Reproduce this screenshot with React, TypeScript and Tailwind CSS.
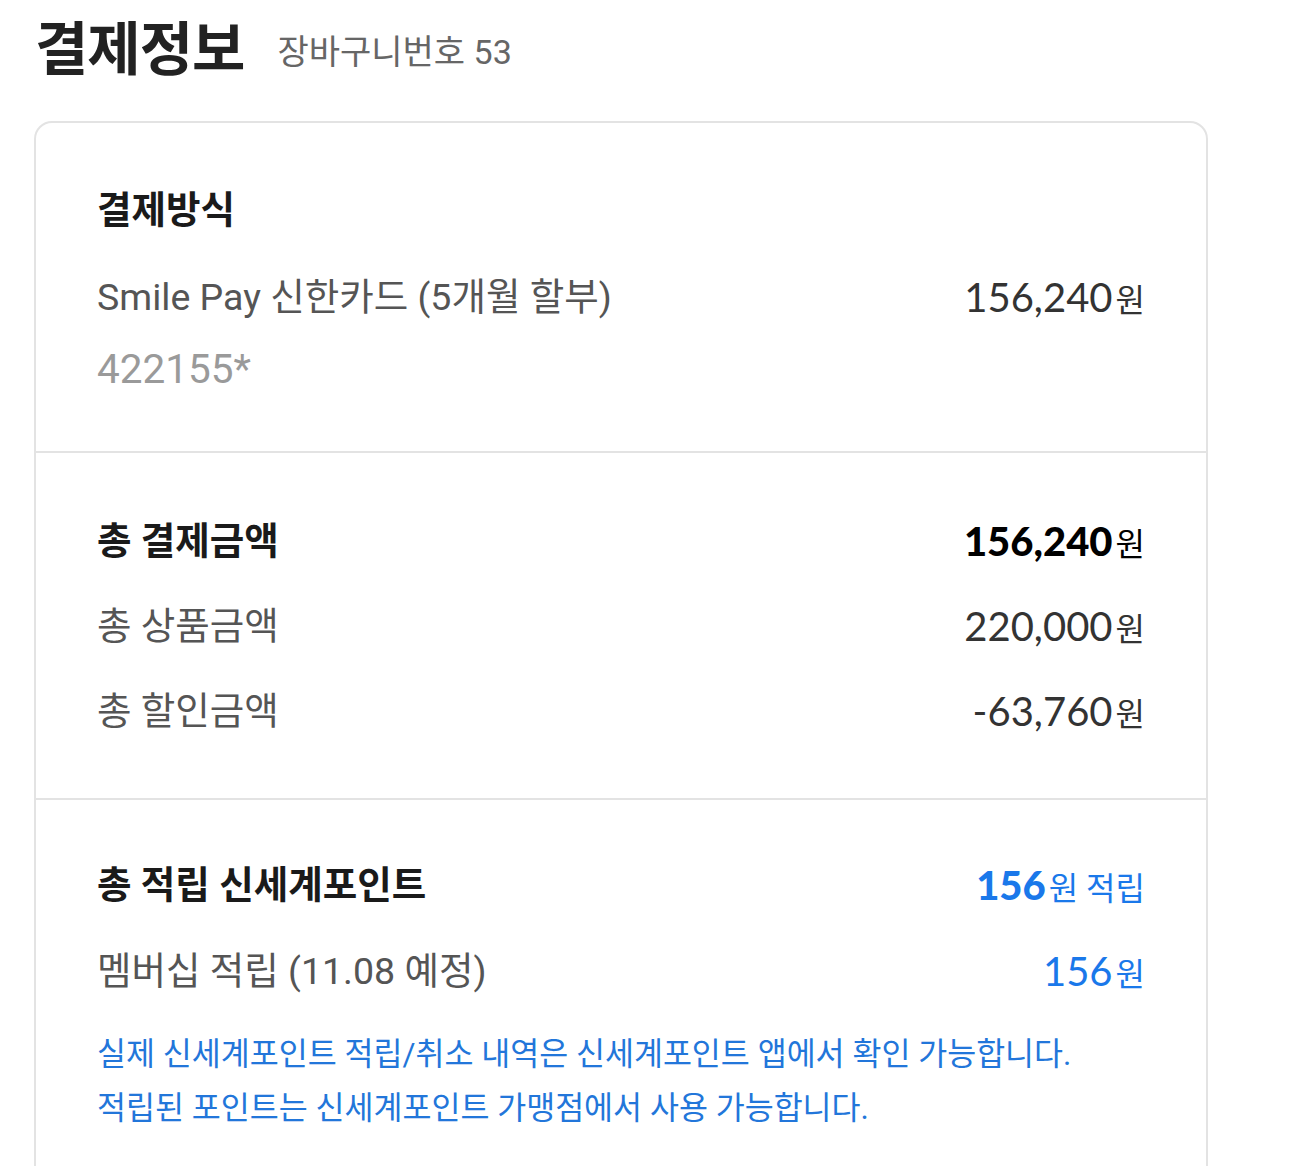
import React from "react";

const KR = "font-['Roboto','Noto_Sans_CJK_KR',sans-serif]";
const NUM = "font-['Lato','Noto_Sans_CJK_KR',sans-serif]";

function Amount({ value, bold, className = "" }: { value: string; bold?: boolean; className?: string }) {
  return (
    <div className={`flex items-baseline gap-[3px] h-[48px] ${className}`}>
      <span className={`${NUM} text-[40px] leading-[48px] ${bold ? "font-black" : "font-normal"}`}>{value}</span>
      <span className={`${KR} text-[32px] leading-[48px]`}>원</span>
    </div>
  );
}

export default function App() {
  return (
    <div className={`bg-white min-h-[1166px] ${KR}`}>
      {/* Page title */}
      <div className="flex items-center h-[84px] pt-[16px] pl-[35px] gap-[33px]">
        <h1 className="text-[58px] leading-[68px] font-bold text-[#222] tracking-[-1px]">결제정보</h1>
        <span className="text-[34px] leading-[40px] mt-[4px] text-[#666]">장바구니번호 53</span>
      </div>

      {/* Card */}
      <div className="ml-[34px] mt-[37px] w-[1174px] border-2 border-[#e3e3e3] rounded-[18px]">
        {/* 결제방식 */}
        <section className="px-[61px] pt-[63px] pb-[58px]">
          <h2 className="text-[37.5px] leading-[48px] h-[48px] font-bold text-[#1a1a1a]">결제방식</h2>
          <div className="flex justify-between items-center h-[48px] mt-[39px]">
            <span className="text-[37.5px] leading-[48px] text-[#555]">Smile Pay 신한카드 (5개월 할부)</span>
            <Amount value="156,240" className="text-[#333]" />
          </div>
          <div className="mt-[24px] h-[48px] text-[40.5px] leading-[48px] text-[#9a9a9a]">422155*</div>
        </section>

        {/* 총 결제금액 */}
        <section className="border-t-2 border-[#e3e3e3] px-[61px] pt-[64px] pb-[63px] flex flex-col gap-[37px]">
          <div className="flex justify-between items-center h-[48px]">
            <h2 className="text-[37.5px] leading-[48px] font-bold text-[#1a1a1a]">총 결제금액</h2>
            <Amount value="156,240" bold className="text-black" />
          </div>
          <div className="flex justify-between items-center h-[48px]">
            <span className="text-[37.5px] leading-[48px] text-[#555]">총 상품금액</span>
            <Amount value="220,000" className="text-[#333]" />
          </div>
          <div className="flex justify-between items-center h-[48px]">
            <span className="text-[37.5px] leading-[48px] text-[#555]">총 할인금액</span>
            <Amount value="-63,760" className="text-[#333]" />
          </div>
        </section>

        {/* 신세계포인트 */}
        <section className="border-t-2 border-[#e3e3e3] px-[61px] pt-[61px] pb-[60px]">
          <div className="flex justify-between items-center h-[48px]">
            <h2 className="text-[37.5px] leading-[48px] font-bold text-[#1a1a1a]">총 적립 신세계포인트</h2>
            <div className="flex items-baseline gap-[3px] h-[48px] text-[#1a78ea]">
              <span className={`${NUM} text-[40px] leading-[48px] font-black`}>156</span>
              <span className="text-[32px] leading-[48px]">원 적립</span>
            </div>
          </div>
          <div className="flex justify-between items-center h-[48px] mt-[38px]">
            <span className="text-[37.5px] leading-[48px] text-[#555]">멤버십 적립 (11.08 예정)</span>
            <Amount value="156" className="text-[#1a78ea]" />
          </div>
          <div className="mt-[33px] text-[31.5px] leading-[54px] text-[#2276da]">
            <p>실제 신세계포인트 적립/취소 내역은 신세계포인트 앱에서 확인 가능합니다.</p>
            <p>적립된 포인트는 신세계포인트 가맹점에서 사용 가능합니다.</p>
          </div>
        </section>
      </div>
    </div>
  );
}
